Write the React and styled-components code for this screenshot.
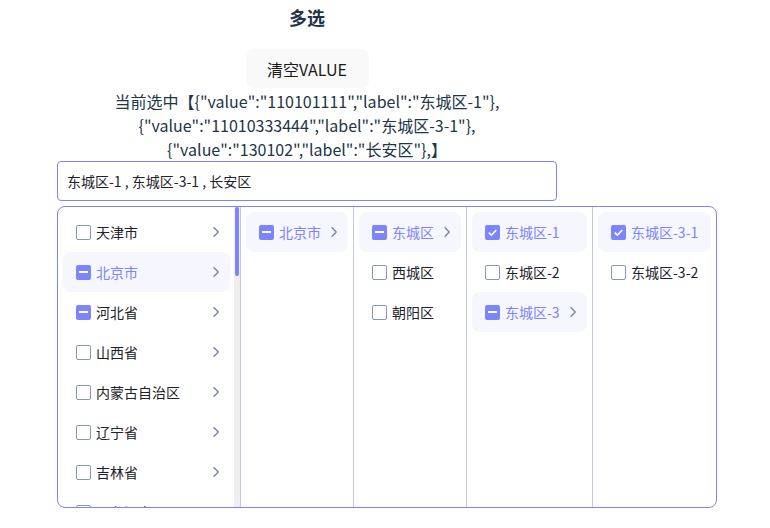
import React from 'react';
import styled, { createGlobalStyle } from 'styled-components';

const PRIMARY = '#7d84ff';
const FONT = '"Noto Sans CJK SC", "Noto Sans", sans-serif';

const GlobalStyle = createGlobalStyle`
  html, body {
    margin: 0;
    padding: 0;
    background: #fff;
  }
  body {
    font-family: ${FONT};
    color: #213547;
  }
`;

const provinces = [
  '天津市', '北京市', '河北省', '山西省', '内蒙古自治区', '辽宁省', '吉林省', '黑龙江省',
  '上海市', '江苏省', '浙江省', '安徽省', '福建省', '江西省', '山东省', '河南省', '湖北省',
  '湖南省', '广东省', '广西壮族自治区', '海南省', '重庆市', '四川省', '贵州省', '云南省',
  '西藏自治区', '陕西省', '甘肃省', '青海省', '宁夏回族自治区', '新疆维吾尔自治区', '台湾省',
  '香港特别行政区', '澳门特别行政区',
];

const half = { 北京市: true, 河北省: true };

const columns = [
  {
    width: 113,
    items: [{ label: '北京市', state: 'half', active: true, more: true }],
  },
  {
    width: 113,
    items: [
      { label: '东城区', state: 'half', active: true, more: true },
      { label: '西城区' },
      { label: '朝阳区' },
    ],
  },
  {
    width: 126,
    items: [
      { label: '东城区-1', state: 'checked', active: true },
      { label: '东城区-2' },
      { label: '东城区-3', state: 'half', active: true, more: true },
    ],
  },
  {
    width: 124,
    items: [
      { label: '东城区-3-1', state: 'checked', active: true },
      { label: '东城区-3-2' },
    ],
  },
];

export default function App() {
  return (
    <>
      <GlobalStyle />
      <Page>
        <Title>多选</Title>
        <ClearButton>清空VALUE</ClearButton>
        <Selected>
          当前选中【{'{"value":"110101111","label":"东城区-1"},'}
          <br />
          {'{"value":"11010333444","label":"东城区-3-1"},'}
          <br />
          {'{"value":"130102","label":"长安区"},'}】
        </Selected>
        <Field>
          <Input>东城区-1 , 东城区-3-1 , 长安区</Input>
          <Panel>
            <ScrollColumn>
              <List>
                {provinces.map((p) => (
                  <Option
                    key={p}
                    label={p}
                    state={half[p] ? 'half' : 'none'}
                    active={p === '北京市'}
                    more
                  />
                ))}
              </List>
              <Track>
                <Thumb />
              </Track>
            </ScrollColumn>
            {columns.map((col, i) => (
              <Column key={i} $width={col.width}>
                {col.items.map((it) => (
                  <Option key={it.label} {...it} />
                ))}
              </Column>
            ))}
          </Panel>
        </Field>
      </Page>
    </>
  );
}

function Option({ label, state = 'none', active, more }) {
  return (
    <Row $active={active}>
      <Box $on={state !== 'none'}>
        {state === 'half' && <Dash />}
        {state === 'checked' && (
          <svg width="11" height="11" viewBox="0 0 10 10">
            <path d="M1.6 5.1 L4 7.4 L8.5 2.7" fill="none" stroke="#fff" strokeWidth="1.5" />
          </svg>
        )}
      </Box>
      <Label $active={active}>{label}</Label>
      {more && (
        <Chevron viewBox="0 0 8 12">
          <path d="M1.6 1.2 L6.2 6 L1.6 10.8" fill="none" stroke="#7f88a6" strokeWidth="1.5" />
        </Chevron>
      )}
    </Row>
  );
}

const Page = styled.div`
  width: 598px;
  padding-left: 8px;
  text-align: center;
`;

const Title = styled.h3`
  margin: 0;
  padding-top: 4px;
  font-size: 18px;
  line-height: 26px;
  font-weight: 700;
  color: #213547;
`;

const ClearButton = styled.button`
  margin-top: 19px;
  height: 39px;
  width: 123px;
  border: 1px solid transparent;
  border-radius: 8px;
  background: #f9f9f9;
  font-family: ${FONT};
  font-size: 16px;
  color: #1a1a1a;
  cursor: pointer;
`;

const Selected = styled.div`
  margin-top: 1px;
  font-size: 16px;
  line-height: 24px;
  color: #213547;
`;

const Field = styled.div`
  width: 660px;
  margin-left: 49px;
  text-align: left;
  display: flex;
  flex-direction: column;
  gap: 5px;
`;

const Input = styled.div`
  box-sizing: border-box;
  width: 500px;
  height: 40px;
  border: 1px solid ${PRIMARY};
  border-radius: 4px;
  padding: 0 9px;
  display: flex;
  align-items: center;
  font-size: 14px;
  color: #1d2129;
`;

const Panel = styled.div`
  width: 660px;
  height: 302px;
  box-sizing: border-box;
  border: 1px solid ${PRIMARY};
  border-radius: 8px;
  background: #fff;
  display: flex;
  overflow: hidden;
`;

const Column = styled.div`
  box-sizing: border-box;
  width: ${(p) => p.$width}px;
  flex: 0 0 auto;
  padding: 5px;
  border-left: 1px solid #c3c8dc;
  &:last-child {
    flex: 1 1 auto;
  }
`;

const ScrollColumn = styled.div`
  width: 182px;
  flex: 0 0 auto;
  display: flex;
`;

const List = styled.div`
  flex: 1 1 auto;
  padding: 5px 4px 5px 5px;
  overflow: hidden;
`;

const Track = styled.div`
  width: 6px;
  flex: 0 0 auto;
  background: #efefef;
`;

const Thumb = styled.div`
  width: 4px;
  height: 69px;
  margin-left: 0.5px;
  border-radius: 2px;
  background: ${PRIMARY};
`;

const Row = styled.div`
  height: 40px;
  display: flex;
  align-items: center;
  padding: 0 10px 0 13px;
  border-radius: 8px;
  background: ${(p) => (p.$active ? '#f6f6ff' : 'transparent')};
  font-size: 14px;
`;

const Box = styled.span`
  box-sizing: border-box;
  width: 15px;
  height: 15px;
  flex: 0 0 auto;
  border-radius: 2px;
  border: ${(p) => (p.$on ? 'none' : '1.5px solid #8a94b3')};
  background: ${(p) => (p.$on ? PRIMARY : '#fff')};
  display: flex;
  align-items: center;
  justify-content: center;
`;

const Dash = styled.span`
  width: 9px;
  height: 2px;
  background: #fff;
`;

const Label = styled.span`
  margin-left: 5px;
  white-space: nowrap;
  color: ${(p) => (p.$active ? PRIMARY : '#1d2129')};
`;

const Chevron = styled.svg`
  width: 8px;
  height: 12px;
  margin-left: auto;
  flex: 0 0 auto;
`;
